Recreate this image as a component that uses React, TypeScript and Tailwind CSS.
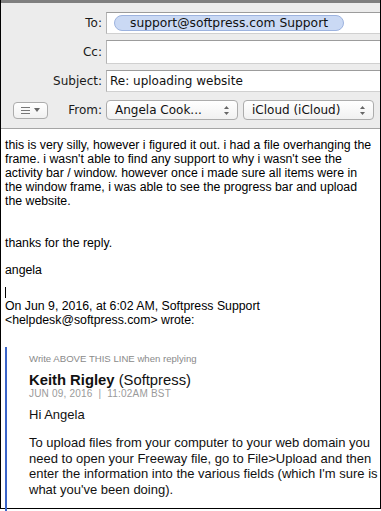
import React from "react";

const headerFont = { fontFamily: '"DejaVu Sans", "Liberation Sans", sans-serif' };
const bodyFont = { fontFamily: '"Liberation Sans", Arial, sans-serif' };

const bodyLines = [
  "this is very silly, however i figured it out. i had a file overhanging the",
  "frame. i wasn't able to find any support to why i wasn't see the",
  "activity bar / window. however once i made sure all items were in",
  "the window frame, i was able to see the progress bar and upload",
  "the website.",
];

const quoteLines = [
  "To upload files from your computer to your web domain you",
  "need to open your Freeway file, go to File>Upload and then",
  "enter the information into the various fields (which I'm sure is",
  "what you've been doing).",
];

const UpDown: React.FC = () => (
  <svg width="7" height="11" viewBox="0 0 7 11" className="shrink-0">
    <path d="M3.5 1 L6 4 L1 4 Z" fill="#666" />
    <path d="M3.5 10 L6 7 L1 7 Z" fill="#666" />
  </svg>
);

const Row: React.FC<{ label: string; children?: React.ReactNode; tall?: boolean }> = ({ label, children, tall }) => (
  <div className="flex items-center">
    <div className="w-[101px] shrink-0 text-right text-[12px] text-[#1a1a1a]">{label}</div>
    <div
      className={`ml-[4px] flex flex-1 items-center border border-r-0 border-t-[#9c9c9c] border-l-[#b4b4b4] border-b-[#d0d0d0] bg-white ${
        tall ? "h-[24px]" : "h-[22px]"
      }`}
    >
      {children}
    </div>
  </div>
);

const SelectBox: React.FC<{ text: string; className?: string }> = ({ text, className }) => (
  <div
    className={`flex h-[20px] items-center justify-between rounded-[4px] border border-[#acacac] bg-gradient-to-b from-white to-[#f1f1f1] pl-[8px] pr-[7px] text-[12px] text-[#111] ${className ?? ""}`}
  >
    <span>{text}</span>
    <UpDown />
  </div>
);

const App: React.FC = () => {
  return (
    <div className="relative h-[511px] w-[381px] overflow-hidden bg-white">
      <div className="flex h-[509px] flex-col border-x border-b border-black">
        {/* compose header */}
        <div className="border-t-[3px] border-t-[#7f7f7f] border-b border-b-[#a5a5a5] bg-[#ececec] pt-[9px] pb-[8px]" style={headerFont}>
          <div className="flex flex-col gap-[6px]">
            <Row label="To:">
              <div className="ml-[7px] flex h-[16px] w-[230px] items-center justify-center rounded-full border border-[#9db3df] bg-[#cad9f4] text-[12.3px] text-[#111]">
                support@softpress.com Support
              </div>
            </Row>
            <Row label="Cc:" tall />
            <Row label="Subject:">
              <span className="pl-[3px] text-[12px] text-[#111]">Re: uploading website</span>
            </Row>
            <div className="mt-[2px] flex items-center">
              <div className="ml-[12px] flex h-[17px] w-[35px] items-center justify-center gap-[4px] rounded-[4px] border border-[#acacac] bg-gradient-to-b from-white to-[#f1f1f1]">
                <svg width="9" height="7" viewBox="0 0 9 7">
                  <path d="M0 0.5 H9 M0 3.5 H9 M0 6.5 H9" stroke="#777" strokeWidth="1" />
                </svg>
                <svg width="6" height="4" viewBox="0 0 6 4">
                  <path d="M0 0 L6 0 L3 4 Z" fill="#666" />
                </svg>
              </div>
              <div className="ml-auto w-[54px] text-right text-[12px] text-[#1a1a1a]">From:</div>
              <SelectBox text="Angela Cook..." className="ml-[4px] w-[132px]" />
              <SelectBox text="iCloud (iCloud)" className="ml-[5px] w-[131px]" />
              <div className="w-[6px]" />
            </div>
          </div>
        </div>

        {/* message body */}
        <div className="flex-1 pl-[4px] pt-[9px] text-[12.3px] leading-[14px] text-black" style={bodyFont}>
          <div>
            {bodyLines.map((line) => (
              <div key={line} className="whitespace-nowrap">
                {line}
              </div>
            ))}
          </div>
          <p className="mt-[28px]">thanks for the reply.</p>
          <p className="mt-[13px]">angela</p>
          <div className="mt-[8px] flex h-[14px] items-center">
            <div className="h-[11px] w-px bg-black" />
          </div>
          <p>On Jun 9, 2016, at 6:02 AM, Softpress Support</p>
          <p>&lt;helpdesk@softpress.com&gt; wrote:</p>

          <div className="mt-[20px] border-l-2 border-[#3a64c8] pl-[22px] pt-[6px] pb-[20px]">
            <p className="text-[9.6px] leading-[12px] text-[#8a8a8a]">Write ABOVE THIS LINE when replying</p>
            <p className="mt-[6px] text-[14.8px] leading-[18px] text-[#111]">
              <span className="font-bold">Keith Rigley</span> (Softpress)
            </p>
            <p className="text-[10px] leading-[10px] tracking-[0.2px] text-[#9a9a9a]">
              JUN 09, 2016 &nbsp;|&nbsp; 11:02AM BST
            </p>
            <p className="mt-[8px] text-[13px] leading-[15.5px] text-[#111]">Hi Angela</p>
            <div className="mt-[12.5px] text-[13px] leading-[15.5px] text-[#111]">
              {quoteLines.map((line) => (
                <div key={line} className="whitespace-nowrap">
                  {line}
                </div>
              ))}
            </div>
          </div>
        </div>
      </div>
    </div>
  );
};

export default App;
